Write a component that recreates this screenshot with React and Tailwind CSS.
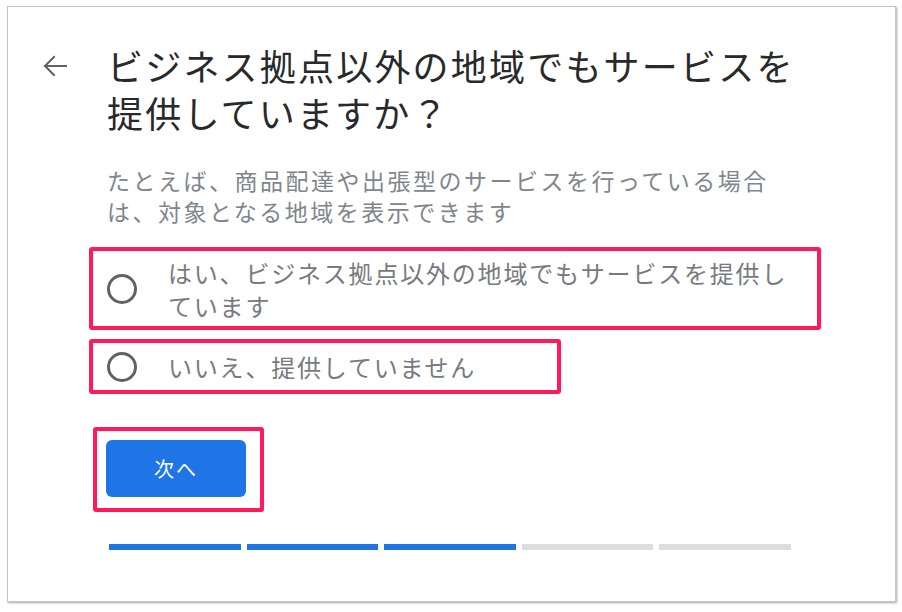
import React from 'react';

const FONT = { fontFamily: '"Noto Sans CJK JP", "Noto Sans", sans-serif' };

function BackArrow() {
  return (
    <svg width="26" height="22" viewBox="0 0 26 22" fill="none" stroke="#5f6368" strokeWidth="2" strokeLinecap="square">
      <path d="M3 11H24" />
      <path d="M12 2L3 11L12 20" />
    </svg>
  );
}

function Radio() {
  return <span className="block w-[30px] h-[30px] shrink-0 rounded-full border-[3px] border-[#5f6368]" />;
}

export default function App() {
  const steps = [true, true, true, false, false];

  return (
    <div className="w-[902px] h-[612px] bg-white pt-[6px] pl-[7px]" style={FONT}>
      <div className="w-[889px] h-[596px] bg-white border border-[#c6c6c6] shadow-[1px_1px_2px_rgba(0,0,0,0.35)] pt-[35px]">
        {/* Header */}
        <div className="flex pl-[34px]">
          <div className="w-[65px] h-[47px] flex items-center shrink-0">
            <BackArrow />
          </div>
          <h1 className="text-[36px] leading-[47px] tracking-[2.2px] text-[#28292b] font-normal whitespace-nowrap">
            ビジネス拠点以外の地域でもサービスを<br />提供していますか？
          </h1>
        </div>

        <p className="ml-[99px] mt-[29px] text-[23px] leading-[31px] tracking-[2.5px] text-[#80868b] whitespace-nowrap">
          たとえば、商品配達や出張型のサービスを行っている場合<br />は、対象となる地域を表示できます
        </p>

        {/* Options */}
        <div className="ml-[81px] mt-[20px] flex flex-col">
          <div className="w-[732px] h-[83px] border-4 border-[#ff1a5c] rounded-[3px] flex items-center pl-[14px]">
            <Radio />
            <div className="ml-[31px] text-[24px] leading-[33px] tracking-[1.8px] text-[#777b80] whitespace-nowrap">
              はい、ビジネス拠点以外の地域でもサービスを提供し<br />ています
            </div>
          </div>
          <div className="mt-[9px] w-[472px] h-[55px] border-4 border-[#ff1a5c] rounded-[3px] flex items-center pl-[14px]">
            <Radio />
            <div className="ml-[31px] text-[24px] leading-[33px] tracking-[1.8px] text-[#777b80] whitespace-nowrap">
              いいえ、提供していません
            </div>
          </div>

          <div className="ml-[4px] mt-[33px] w-[171px] h-[85px] border-4 border-[#ff1a5c] rounded-[3px] pl-[9px] pt-[9px]">
            <button className="w-[140px] h-[57px] rounded-[6px] bg-[#1f74e6] text-white text-[20px] tracking-[2px] flex items-center justify-center">
              次へ
            </button>
          </div>

          <div className="ml-[20px] mt-[32px] w-[682px] grid grid-cols-5 gap-[6px]">
            {steps.map((done, i) => (
              <div key={i} className={done ? 'h-[6px] bg-[#1f74e6]' : 'h-[6px] bg-[#dcdde1]'} />
            ))}
          </div>
        </div>
      </div>
    </div>
  );
}
